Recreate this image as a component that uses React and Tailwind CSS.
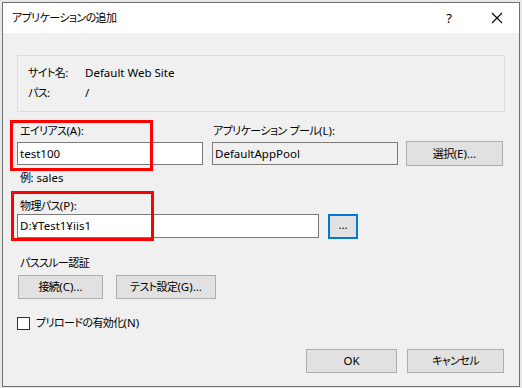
import React from "react";

const font = {
  fontFamily: '"Noto Sans", "Noto Sans CJK JP", sans-serif',
};

// 和文だけ少し小さく詰めて、Yu Gothic UI の幅に寄せる
const CJK = /([\u3000-\u30ff\u4e00-\u9fff\uff00-\uffef]+)/;

function J({ children }) {
  const parts = String(children).split(CJK);
  return (
    <>
      {parts.map((p, i) =>
        CJK.test(p) ? (
          <span key={i} className="text-[11px] tracking-[-0.6px]">
            {p}
          </span>
        ) : (
          <span key={i}>{p}</span>
        )
      )}
    </>
  );
}

function Btn({ children, className = "" }) {
  return (
    <div
      className={`flex items-center justify-center bg-[#e1e1e1] border border-[#adadad] text-black ${className}`}
    >
      <J>{children}</J>
    </div>
  );
}

export default function App() {
  return (
    <div
      className="w-[522px] h-[388px] bg-[#e9e9e9] overflow-hidden relative [font-feature-settings:'palt'] text-[11.5px] leading-[16px] text-black"
      style={font}
    >
      {/* ダイアログ本体 */}
      <div className="ml-[2px] mt-[2px] w-[518px] h-[385px] border border-[#6f6f6f] bg-[#f0f0f0] flex flex-col">
        {/* タイトルバー */}
        <div className="h-[30px] bg-white flex items-center pl-[9px] shrink-0">
          <span className="flex-1">
            <J>アプリケーションの追加</J>
          </span>
          <span className="w-[14px] text-center text-[13px] mr-[35px]">?</span>
          <svg width="12" height="12" viewBox="0 0 12 12" className="mr-[16px]">
            <path d="M1 1 L11 11 M11 1 L1 11" stroke="#000" strokeWidth="1.1" />
          </svg>
        </div>

        <div className="pl-[14px] flex flex-col">
          {/* サイト情報 */}
          <div className="mt-[22px] w-[488px] h-[57px] border border-[#dcdcdc] pl-[10px] pt-[7px] leading-[20px]">
            <div className="flex">
              <span className="w-[57px]">
                <J>サイト名:</J>
              </span>
              <span>Default Web Site</span>
            </div>
            <div className="flex">
              <span className="w-[57px]">
                <J>パス:</J>
              </span>
              <span>/</span>
            </div>
          </div>

          {/* エイリアス / プール */}
          <div className="mt-[11px] flex items-end">
            <div className="w-[186px] flex flex-col">
              <span className="pl-[3px]">
                <J>エイリアス(A):</J>
              </span>
              <div className="mt-[3px] h-[23px] border border-[#7a7a7a] bg-white flex items-center pl-[2px]">
                test100
              </div>
            </div>
            <div className="ml-[9px] w-[186px] flex flex-col">
              <span className="pl-[1px]">
                <J>アプリケーション プール(L):</J>
              </span>
              <div className="mt-[3px] h-[23px] border border-[#7a7a7a] bg-[#f0f0f0] flex items-center pl-[2px]">
                DefaultAppPool
              </div>
            </div>
            <Btn className="ml-[8px] w-[97px] h-[25px] -mb-[1px]">選択(E)...</Btn>
          </div>

          <span className="mt-[5px] pl-[3px]">
            <J>例: sales</J>
          </span>

          {/* 物理パス */}
          <span className="mt-[12px] pl-[3px]">
            <J>物理パス(P):</J>
          </span>
          <div className="flex items-start">
            <div className="w-[302px] h-[24px] border border-[#7a7a7a] bg-white flex items-center pl-[2px]">
              D:¥Test1¥iis1
            </div>
            <div className="ml-[9px] w-[30px] h-[25px] border-2 border-[#0078d7] bg-[#e1e1e1] flex items-center justify-center leading-none pb-[3px]">
              ...
            </div>
          </div>

          {/* パススルー認証 */}
          <span className="mt-[16px] pl-[3px]">
            <J>パススルー認証</J>
          </span>
          <div className="mt-[4px] flex pl-[1px]">
            <Btn className="w-[85px] h-[24px]">接続(C)...</Btn>
            <Btn className="ml-[13px] w-[100px] h-[24px]">テスト設定(G)...</Btn>
          </div>

          {/* プリロード */}
          <div className="mt-[16px] flex items-center">
            <div className="w-[13px] h-[13px] border border-[#333] bg-white" />
            <span className="ml-[6px]">
              <J>プリロードの有効化(N)</J>
            </span>
          </div>

          {/* OK / キャンセル */}
          <div className="mt-[18px] flex pl-[289px]">
            <Btn className="w-[91px] h-[24px]">OK</Btn>
            <Btn className="ml-[10px] w-[97px] h-[24px]">キャンセル</Btn>
          </div>
        </div>
      </div>

      {/* 赤枠の注釈 */}
      <div className="absolute left-[10px] top-[120px] w-[143px] h-[51px] border-[3px] border-[#ff0000]" />
      <div className="absolute left-[11px] top-[191px] w-[143px] h-[50px] border-[3px] border-[#ff0000]" />
    </div>
  );
}
